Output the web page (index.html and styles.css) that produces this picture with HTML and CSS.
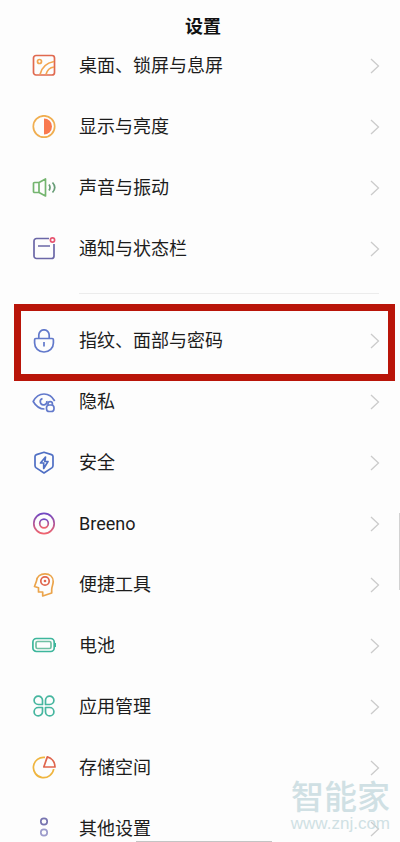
FILE: index.html
```html
<!DOCTYPE html>
<html lang="zh-CN">
<head>
<meta charset="utf-8">
<meta name="viewport" content="width=device-width, initial-scale=1">
<title>设置</title>
<link rel="stylesheet" href="styles.css">
</head>
<body>
<svg width="0" height="0" class="defs" aria-hidden="true">
  <defs>
    <linearGradient id="breeno" x1="0" y1="0" x2="0" y2="1"><stop offset="0" stop-color="#7048c4"/><stop offset="1" stop-color="#f0646e"/></linearGradient>
    <symbol id="chevron" viewBox="0 0 10 16"><path d="M1 1l7.500 7L1 15" fill="none" stroke="#cbcbcb" stroke-width="1.300"/></symbol>
  </defs>
</svg>
<div class="app">
  <header class="header"><h1>设置</h1></header>
  <main class="content">
    <ul class="group">
      <li><a class="row" href="#">
        <svg class="icon" viewBox="0 0 24 24" stroke="#f2a550"><rect x="1.500" y="1.500" width="21" height="19.500" rx="2.500" stroke="#e0694f"/><circle cx="7.500" cy="7.500" r="2"/><path d="M8 20.500C9.500 14 14 9 22 7.500M14 20.500c1-4 4-7 8-7.500"/></svg>
        <span class="label">桌面、锁屏与息屏</span><svg class="chevron"><use href="#chevron"/></svg></a></li>
      <li><a class="row" href="#">
        <svg class="icon" viewBox="0 0 24 24" stroke="#f0ae50"><circle cx="12" cy="11.500" r="10.700"/><path d="M12 3.500a8 8 0 0 1 0 16z" fill="#f9794f" stroke="none"/></svg>
        <span class="label">显示与亮度</span><svg class="chevron"><use href="#chevron"/></svg></a></li>
      <li><a class="row" href="#">
        <svg class="icon" viewBox="0 0 24 24" stroke="#74b56f"><path d="M2.500 6.500H7L13.500 3v17L7 16.500H2.500a1 1 0 0 1-1-1v-8a1 1 0 0 1 1-1zM7 6.500v10"/><path d="M17 8.500q2 3 0 6M20.500 6.500q4.500 5 0 10" stroke="#689d77"/></svg>
        <span class="label">声音与振动</span><svg class="chevron"><use href="#chevron"/></svg></a></li>
      <li><a class="row" href="#">
        <svg class="icon" viewBox="0 0 24 24" stroke="#6b67a7"><path d="M17 1.500H4.500a2.500 2.500 0 0 0-2.500 2.500v15a2.500 2.500 0 0 0 2.500 2.500h15a2.500 2.500 0 0 0 2.500-2.500V7M6 9h12"/><circle cx="20.500" cy="3" r="2.100" stroke="#e75571"/></svg>
        <span class="label">通知与状态栏</span><svg class="chevron"><use href="#chevron"/></svg></a></li>
    </ul>
    <hr class="divider">
    <ul class="group">
      <li><a class="row marked" href="#">
        <svg class="icon" viewBox="0 0 24 24" stroke="#6279cb"><path d="M6.800 9.500V6a5.200 5.200 0 0 1 10.400 0v3.500M3.800 9.500h16.400a1.200 1.200 0 0 1 1.200 1.200V14c0 5-4 9-9.400 9s-9.400-4-9.400-9v-3.300a1.200 1.200 0 0 1 1.200-1.200zM12 13v4.500"/></svg>
        <span class="label">指纹、面部与密码</span><svg class="chevron"><use href="#chevron"/></svg></a></li>
      <li><a class="row" href="#">
        <svg class="icon" viewBox="0 0 24 24" stroke="#6279cb"><path d="M12.500 19C7 19 3.500 15.500 1.200 11.500 3.500 7 7.500 4 12 4s8.500 3 10.700 7M10.500 8.500a3.300 3.300 0 1 0 4.300 2.500"/><rect x="14.500" y="15" width="7.500" height="6.500" rx="2.800"/><path d="M16 15v-1.200a2.200 2.200 0 0 1 4.400 0V15"/></svg>
        <span class="label">隐私</span><svg class="chevron"><use href="#chevron"/></svg></a></li>
      <li><a class="row" href="#">
        <svg class="icon" viewBox="0 0 24 24" stroke="#4f6fc4"><path d="M12 1.300l7.500 2.300q1.500.5 1.500 1.900v9q0 1.500-1.200 2.400L12 22l-7.800-5.100Q3 16 3 14.500v-9q0-1.400 1.500-1.900z"/><path d="M13.500 6L8.500 12h3.200v5.500l4.300-7h-3.200z"/></svg>
        <span class="label">安全</span><svg class="chevron"><use href="#chevron"/></svg></a></li>
      <li><a class="row" href="#">
        <svg class="icon" viewBox="0 0 24 24" stroke="url(#breeno)"><circle cx="12" cy="11.500" r="10.200"/><circle cx="12" cy="11.500" r="4.300"/></svg>
        <span class="label">Breeno</span><svg class="chevron"><use href="#chevron"/></svg></a></li>
      <li><a class="row" href="#">
        <svg class="icon" viewBox="0 0 24 24" stroke="#eba44b"><path d="M4.500 8C5 3.500 8.500.9 13 .9c5 0 8.200 3.100 8.200 7.600 0 3-1.500 5.500-1.500 8v3.500l-9 3v-4H6.500v-4.200L2.500 13.500z"/><circle cx="13" cy="8" r="4.200" stroke="#df654d"/><circle cx="13" cy="8" r="1.300" fill="#df654d" stroke="none"/></svg>
        <span class="label">便捷工具</span><svg class="chevron"><use href="#chevron"/></svg></a></li>
      <li><a class="row" href="#">
        <svg class="icon" viewBox="0 0 24 24" stroke="#3db69c"><rect x=".9" y="4.500" width="21.300" height="13" rx="3.500"/><rect x="4" y="7.500" width="15" height="7" rx="1.500" stroke="#70c0a3"/><path d="M23.300 9v4"/></svg>
        <span class="label">电池</span><svg class="chevron"><use href="#chevron"/></svg></a></li>
      <li><a class="row" href="#">
        <svg class="icon" viewBox="0 0 24 24" stroke="#46b69f"><path d="M10.500 9.500H6.300A4.200 4.200 0 1 1 10.500 5.300zM13.500 9.500h4.200a4.200 4.200 0 1 0-4.200-4.200zM10.500 12.500H6.300a4.200 4.200 0 1 0 4.200 4.200zM13.500 12.500h4.200a4.200 4.200 0 1 1-4.200 4.200z"/></svg>
        <span class="label">应用管理</span><svg class="chevron"><use href="#chevron"/></svg></a></li>
      <li><a class="row" href="#">
        <svg class="icon" viewBox="0 0 24 24" stroke="#efb53f"><path d="M13 1.400a10.200 10.200 0 1 0 8.700 11.600"/><path d="M15.300.9L11.800 11h11.200C23 6.200 19.800 2.200 15.300.9z" stroke="#df654d"/></svg>
        <span class="label">存储空间</span><svg class="chevron"><use href="#chevron"/></svg></a></li>
      <li><a class="row" href="#">
        <svg class="icon" viewBox="0 0 24 24" stroke="#7774b0"><circle cx="12" cy="4.500" r="3.200"/><circle cx="12" cy="15.500" r="3.200" stroke="#9c9bcb"/></svg>
        <span class="label">其他设置</span><svg class="chevron"><use href="#chevron"/></svg></a></li>
    </ul>
  </main>
  <div class="scroll-thumb"></div>
  <div class="home-bar"></div>
  <div class="watermark"><span class="brand">智能家</span><span class="site">www.znj.com</span></div>
</div>
</body>
</html>
```
FILE: styles.css
```css
* { box-sizing: border-box; }
body {
  margin: 0;
  background: #fdfdfd;
  color: #1c1c1c;
  font-family: Roboto, "Noto Sans CJK SC", sans-serif;
}
.defs { position: absolute; }
.app {
  position: relative;
  display: flex;
  flex-direction: column;
  height: 100vh;
  overflow: hidden;
}
.header {
  flex: none;
  display: flex;
  align-items: center;
  justify-content: center;
  height: 54px;
  padding-left: 6px;
}
.header h1 {
  margin: 0;
  color: #111;
  font-size: 18px;
  line-height: 24px;
  font-weight: 700;
}
.content {
  flex: 1;
  min-height: 0;
  overflow-y: auto;
  scrollbar-width: none;
}
.group {
  margin: 0;
  padding: 0;
  list-style: none;
}
.group:first-child { margin-top: -19px; }
.row {
  position: relative;
  display: flex;
  align-items: center;
  height: 61px;
  padding: 0 20px 0 32px;
  color: inherit;
  font-size: 18px;
  line-height: 24px;
  text-decoration: none;
}
.icon {
  flex: none;
  width: 24px;
  height: 24px;
  margin-right: 23px;
  fill: none;
  stroke-width: 1.7;
  stroke-linejoin: round;
}
.label { flex: 1; }
.chevron {
  flex: none;
  width: 10px;
  height: 16px;
}
.divider {
  height: 1px;
  margin: 14px 21px 16px 79px;
  border: 0;
  background: #ececec;
}
.marked::after {
  content: "";
  position: absolute;
  inset: -6px 5px -10px 14px;
  border: 7px solid #b91509;
  z-index: 1;
}
.scroll-thumb {
  position: absolute;
  top: 513px;
  right: 0;
  width: 1px;
  height: 77px;
  background: #d2d2d2;
}
.home-bar {
  position: absolute;
  bottom: 0;
  left: 34%;
  right: 32%;
  height: 1px;
  background: #c4c4c4;
}
.watermark {
  position: absolute;
  right: 10px;
  bottom: 8px;
  display: flex;
  flex-direction: column;
  align-items: center;
  color: #c5dade;
  opacity: .8;
  pointer-events: none;
}
.brand {
  font-family: "Noto Sans CJK SC", sans-serif;
  font-size: 33px;
  line-height: 38px;
  font-weight: 500;
}
.site {
  font-family: "Liberation Sans", sans-serif;
  font-size: 17px;
  line-height: 20px;
}
```
